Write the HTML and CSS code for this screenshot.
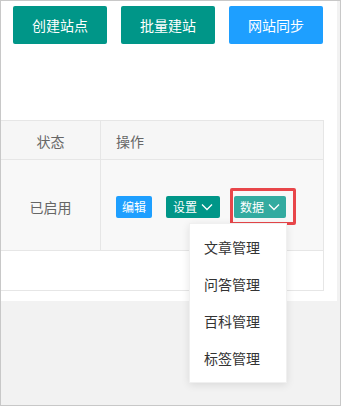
FILE: index.html
```html
<!DOCTYPE html>
<html lang="zh-CN">
<head>
<meta charset="utf-8">
<title>站点管理</title>
<link rel="stylesheet" href="styles.css">
</head>
<body>
<div class="frame">
  <div class="panel">
    <div class="toolbar">
      <button class="btn btn-teal">创建站点</button>
      <button class="btn btn-teal">批量建站</button>
      <button class="btn btn-blue">网站同步</button>
    </div>
    <div class="grid">
      <div class="row head">
        <div class="cell status">状态</div>
        <div class="cell ops">操作</div>
      </div>
      <div class="row tall">
        <div class="cell status">已启用</div>
        <div class="cell ops">
          <div class="actions">
            <span class="xbtn xbtn-blue">编辑</span>
            <span class="xbtn xbtn-teal">设置<svg class="chev" viewBox="0 0 12 8" width="12" height="8"><path d="M1 1.5 L6 6.5 L11 1.5"/></svg></span>
            <span class="drop">
              <span class="xbtn xbtn-hover">数据<svg class="chev" viewBox="0 0 12 8" width="12" height="8"><path d="M1 1.5 L6 6.5 L11 1.5"/></svg></span>
              <span class="mark"></span>
              <ul class="menu">
                <li>文章管理</li>
                <li>问答管理</li>
                <li>百科管理</li>
                <li>标签管理</li>
              </ul>
            </span>
          </div>
        </div>
      </div>
      <div class="row short"></div>
    </div>
  </div>
</div>
</body>
</html>
```

FILE: styles.css
```css
* { box-sizing: border-box; }
html, body { margin: 0; padding: 0; }
body {
  font-family: "Noto Sans CJK SC", "Noto Sans", sans-serif;
  font-size: 14px;
  color: #666;
}
.frame {
  width: 341px;
  height: 406px;
  border: 1px solid #c8c8c8;
  background: #f2f2f2;
  display: flex;
  flex-direction: column;
}
.panel {
  background: #fff;
  margin-right: 3px;
  padding: 5px 0 10px 0;
}
.toolbar {
  display: flex;
  gap: 14px;
  padding-left: 12px;
  margin-bottom: 76px;
}
.btn {
  width: 94px;
  height: 38px;
  border: none;
  border-radius: 2px;
  color: #fff;
  font-family: inherit;
  font-size: 14px;
  line-height: 38px;
  padding: 0;
}
.btn-teal { background: #009688; }
.btn-blue { background: #1e9fff; }

.grid {
  width: 323px;
  border-top: 1px solid #e6e6e6;
  border-right: 1px solid #e6e6e6;
}
.row {
  display: grid;
  grid-template-columns: 100px 1fr;
  border-bottom: 1px solid #e6e6e6;
}
.row.head { height: 39px; background: #f6f6f6; }
.row.tall { height: 91px; background: #f8f8f8; }
.row.short { height: 40px; background: #fff; }
.cell {
  display: flex;
  align-items: center;
  line-height: 20px;
}
.cell.status {
  justify-content: center;
  border-right: 1px solid #e6e6e6;
  padding-top: 2px;
}
.cell.ops {
  padding-left: 15px;
  padding-top: 2px;
}
.row.tall .cell { padding-top: 4px; }
.actions {
  display: flex;
  align-items: center;
  gap: 14px;
}
.xbtn {
  display: inline-flex;
  align-items: center;
  gap: 4px;
  height: 22px;
  padding: 0 6px;
  border-radius: 2px;
  color: #fff;
  font-size: 12px;
  line-height: 22px;
}
.xbtn-blue { background: #1e9fff; }
.xbtn-teal { background: #009688; padding: 0 7px; }
.xbtn-hover { background: #33aba0; padding: 0 6px; }
.chev path {
  fill: none;
  stroke: #fff;
  stroke-width: 1.3;
}
.drop {
  position: relative;
  display: inline-flex;
}
.mark {
  position: absolute;
  left: -4px;
  top: -8px;
  width: 66px;
  height: 37px;
  border: 3px solid #e8464a;
  border-radius: 2px;
}
.menu {
  position: absolute;
  left: -45px;
  top: 27px;
  width: 98px;
  margin: 0;
  padding: 5px 0;
  list-style: none;
  background: #fff;
  border: 1px solid #f0f0f0;
  box-shadow: 0 2px 8px rgba(0, 0, 0, 0.1);
  z-index: 5;
}
.menu li {
  height: 37px;
  line-height: 37px;
  padding-left: 14px;
  color: #333;
  font-size: 14px;
}
```
